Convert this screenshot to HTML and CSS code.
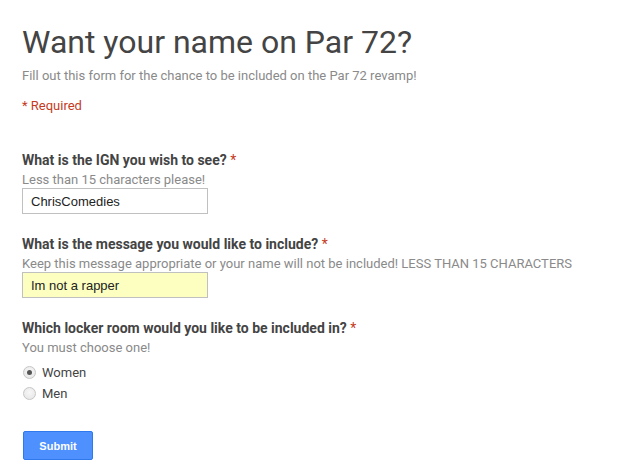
FILE: index.html
```html
<!DOCTYPE html>
<html>
<head>
<meta charset="utf-8">
<title>Want your name on Par 72?</title>
<link rel="stylesheet" href="styles.css">
</head>
<body>
<form class="form">
  <h1 class="title">Want your name on Par 72?</h1>
  <div class="desc">Fill out this form for the chance to be included on the Par 72 revamp!</div>
  <div class="required">* Required</div>

  <div class="question q-first">
    <div class="q-title">What is the IGN you wish to see? <span class="star">*</span></div>
    <div class="q-help">Less than 15 characters please!</div>
    <input class="text-input" type="text" value="ChrisComedies">
  </div>

  <div class="question">
    <div class="q-title">What is the message you would like to include? <span class="star">*</span></div>
    <div class="q-help">Keep this message appropriate or your name will not be included! LESS THAN 15 CHARACTERS</div>
    <input class="text-input autofilled" type="text" value="Im not a rapper">
  </div>

  <div class="question">
    <div class="q-title">Which locker room would you like to be included in? <span class="star">*</span></div>
    <div class="q-help">You must choose one!</div>
    <div class="options">
      <label class="option"><span class="radio checked"></span><span class="opt-label">Women</span></label>
      <label class="option"><span class="radio"></span><span class="opt-label">Men</span></label>
    </div>
  </div>

  <div class="actions">
    <button type="button" class="submit">Submit</button>
  </div>
</form>
</body>
</html>
```
FILE: styles.css
```css
html, body {
  margin: 0;
  padding: 0;
  background: #ffffff;
}

.form {
  padding: 24px 22px 0 22px;
  font-family: Roboto, "Liberation Sans", Arial, sans-serif;
  color: #444444;
}

.title {
  margin: 0;
  font-size: 32px;
  line-height: 36px;
  font-weight: 400;
  color: #444444;
}

.desc {
  margin-top: 7px;
  font-size: 13px;
  line-height: 18px;
  color: #8a8a8a;
}

.required {
  margin-top: 12px;
  font-size: 13px;
  line-height: 18px;
  color: #c43b1d;
}

.question {
  margin-top: 20px;
  display: flex;
  flex-direction: column;
  align-items: flex-start;
}

.q-first {
  margin-top: 35px;
}

.q-title {
  font-size: 14px;
  line-height: 20px;
  font-weight: 700;
  color: #444444;
}

.star {
  color: #c43b1d;
  font-weight: 400;
}

.q-help {
  margin-top: 2px;
  font-size: 13px;
  line-height: 16px;
  color: #8a8a8a;
}

.text-input {
  box-sizing: border-box;
  width: 186px;
  height: 26px;
  margin: 0;
  padding: 0 8px;
  border: 1px solid #c0c0c0;
  border-radius: 0;
  background: #ffffff;
  font-family: "Liberation Sans", Arial, sans-serif;
  font-size: 13px;
  color: #222222;
  outline: none;
}

.autofilled {
  background: #fcffc0;
}

.options {
  margin-top: 6px;
  display: flex;
  flex-direction: column;
}

.option {
  display: flex;
  align-items: center;
  height: 21px;
  gap: 6px;
}

.radio {
  box-sizing: border-box;
  width: 13px;
  height: 13px;
  margin-left: 1px;
  border-radius: 50%;
  border: 1px solid #c6c6c6;
  background: radial-gradient(circle at 50% 40%, #f7f7f7 0%, #e4e4e4 100%);
  display: flex;
  align-items: center;
  justify-content: center;
}

.radio.checked::after {
  content: "";
  width: 5px;
  height: 5px;
  border-radius: 50%;
  background: #555555;
}

.opt-label {
  font-size: 13px;
  color: #444444;
}

.actions {
  margin-top: 27px;
}

.submit {
  box-sizing: border-box;
  width: 70px;
  height: 29px;
  margin-left: 1px;
  padding: 0;
  border: 1px solid #3079ed;
  border-radius: 2px;
  background: #4d90fe;
  color: #ffffff;
  font-family: "Liberation Sans", Arial, sans-serif;
  font-size: 11px;
  font-weight: 700;
}
```
